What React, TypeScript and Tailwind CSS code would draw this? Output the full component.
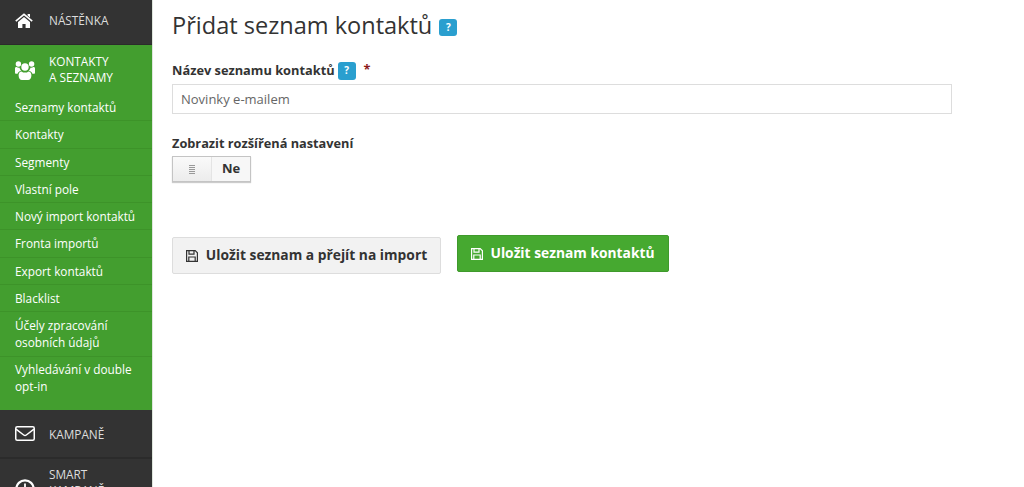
const sub = [
  ["Seznamy kontaktů"],
  ["Kontakty"],
  ["Segmenty"],
  ["Vlastní pole"],
  ["Nový import kontaktů"],
  ["Fronta importů"],
  ["Export kontaktů"],
  ["Blacklist"],
  ["Účely zpracování", "osobních údajů"],
  ["Vyhledávání v double", "opt-in"],
];

function Help({ className }: { className: string }) {
  return (
    <span className={`inline-flex items-center justify-center rounded-[3px] bg-[#2a9fcf] text-white font-bold ${className}`}>?</span>
  );
}

function Home() {
  return (
    <svg viewBox="0 0 18 15" className="mr-[16px] h-[15px] w-[18px] text-white" fill="none">
      <path d="M0.8 8.2 9 1.4l8.2 6.8" stroke="currentColor" strokeWidth="1.7" />
      <path d="M12.6 1h2.4v3.6l-2.4-2z" fill="currentColor" />
      <path d="M3 9 9 4l6 5v6h-4.4v-4H7.4v4H3z" fill="currentColor" />
    </svg>
  );
}

function Users() {
  return (
    <svg viewBox="0 0 20 20" className="mr-[14px] h-[20px] w-[20px] text-white" fill="currentColor">
      <circle cx="3.4" cy="4" r="2.7" />
      <circle cx="16.6" cy="4" r="2.7" />
      <circle cx="10" cy="7" r="3.7" />
      <path d="M0 8.4c0-1 .8-1.4 1.6-1.4.8.6 2 1 3 .7.2 1.3.9 2.3 1.8 3-1.8.3-3.2 1.3-3.8 3H.8C.3 13.700 0 13.300 0 12.800z" />
      <path d="M20 8.400c0-1-.8-1.400-1.600-1.400-.8.600-2 1-3 .7-.2 1.300-.9 2.300-1.800 3 1.800.3 3.200 1.300 3.800 3h1.800c.5 0 .8-.4.8-.9z" />
      <path d="M6.500 11.400c1 .8 2.200 1.200 3.500 1.200s2.500-.4 3.500-1.200c1.700.2 2.900 1.300 2.900 3.800 0 2.700-1.400 4.800-3.300 4.800H6.900C5 20 3.600 17.900 3.600 15.200c0-2.500 1.200-3.600 2.900-3.800z" />
    </svg>
  );
}

function Envelope() {
  return (
    <svg viewBox="0 0 20 15" className="mr-[14px] h-[15px] w-[20px] text-white" fill="none" stroke="currentColor" strokeWidth="1.500">
      <rect x="0.750" y="0.750" width="18.500" height="13.500" rx="1.500" />
      <path d="M1 3.200 8.700 9c.8.600 1.800.600 2.600 0L19 3.200" />
    </svg>
  );
}

function Clock() {
  return (
    <svg viewBox="0 0 20 20" className="mr-[14px] mt-[13px] h-[20px] w-[20px] text-white" fill="none" stroke="currentColor" strokeWidth="2.200">
      <circle cx="10" cy="10" r="8.700" />
      <path d="M10 4.500V11H14" strokeWidth="1.800" />
    </svg>
  );
}

function Save({ className }: { className: string }) {
  return (
    <svg viewBox="0 0 12 12" className={className} fill="none" stroke="currentColor" strokeWidth="1.200">
      <path d="M.6.6h8.600l2.200 2.200v8.600H.6z" />
      <path d="M3 .8v3.400h5V.8M2.800 11.200V7h6.400v4.200" />
    </svg>
  );
}

export default function App() {
  return (
    <div className="flex h-[487px] w-[1024px] overflow-hidden bg-white font-['Open_Sans',sans-serif] text-[#333]">
      <aside className="flex h-full w-[153px] shrink-0 flex-col overflow-hidden border-r border-[#dfe6dd] bg-[#333333] text-[11.800px]">
        <div className="flex h-[45px] shrink-0 items-center border-b border-[#2b2b2b] pb-[3px] pl-[15px] text-[#dddddd]">
          <Home />
          <span>NÁSTĚNKA</span>
        </div>
        <div className="flex h-[365px] shrink-0 flex-col bg-[#439e2f] text-white">
          <div className="flex h-[49px] shrink-0 items-center pl-[15px] leading-[16px]">
            <Users />
            <span className="pb-[2px]">KONTAKTY<br />A SEZNAMY</span>
          </div>
          {sub.map((lines, i) => (
            <div key={i} className="flex flex-col justify-center border-b border-[#3d9329] pb-[4.300px] pl-[15px] pt-[5px] leading-[17px] last:border-b-0 last:pt-[4px]">
              {lines.map((l) => (
                <span key={l}>{l}</span>
              ))}
            </div>
          ))}
        </div>
        <div className="flex h-[49px] shrink-0 items-center border-b-2 border-[#2b2b2b] pl-[15px] text-[#dddddd]">
          <Envelope />
          <span className="pt-[3px]">KAMPANĚ</span>
        </div>
        <div className="flex items-start pl-[15px] pt-[7px] leading-[16px] text-[#dddddd]">
          <Clock />
          <span>SMART<br />KAMPANĚ</span>
        </div>
      </aside>
      <main className="flex-1 pl-[19px] pt-[9px]">
        <div className="flex items-center gap-[7px]">
          <h1 className="text-[23.550px] leading-[33px] text-[#333]">Přidat seznam kontaktů</h1>
          <Help className="mt-[3px] h-[17px] w-[18px] text-[10px]" />
        </div>
        <div className="mt-[19px] flex h-[20px] items-center text-[12.800px] font-bold">
          <span>Název seznamu kontaktů</span>
          <Help className="mb-[1px] ml-[3px] h-[18px] w-[18px] text-[10px]" />
          <span className="mb-[2px] ml-[8px] text-[#8b1a1a]">*</span>
        </div>
        <div className="mt-[3px] flex h-[30px] w-[780px] items-center border border-[#dddddd] pl-[8px] pt-[1px] text-[13px] text-[#666]">
          Novinky e-mailem
        </div>
        <div className="mt-[20px] text-[12.750px] font-bold leading-[18px]">Zobrazit rozšířená nastavení</div>
        <div className="mt-[4px] flex h-[26px] w-[79px] border border-[#c4c4c4] shadow-[0_1px_1px_rgba(0,0,0,0.2)]">
          <div className="flex w-[39px] items-center justify-center border-r border-[#e4e4e4] bg-gradient-to-b from-[#fafafa] to-[#ececec]">
            <div className="h-[10px] w-[6px] bg-[repeating-linear-gradient(0deg,#999_0,#999_1px,transparent_1px,transparent_2px)]" />
          </div>
          <div className="flex flex-1 items-center justify-center bg-[#f7f7f7] text-[13px] font-bold">Ne</div>
        </div>
        <div className="mt-[53px] flex items-start gap-[16px]">
          <button className="mt-[2px] flex h-[37px] w-[269px] items-center justify-center gap-[8px] rounded-[2px] border border-[#dddddd] bg-[#f2f2f2] text-[13.800px] font-bold text-[#333]">
            <Save className="h-[12px] w-[12px]" />
            Uložit seznam a přejít na import
          </button>
          <button className="flex h-[37px] w-[212px] items-center justify-center gap-[7px] rounded-[2px] border border-[#3f9a2c] bg-[#46a930] text-[13.800px] font-bold text-white">
            <Save className="h-[12px] w-[12px]" />
            Uložit seznam kontaktů
          </button>
        </div>
      </main>
    </div>
  );
}
